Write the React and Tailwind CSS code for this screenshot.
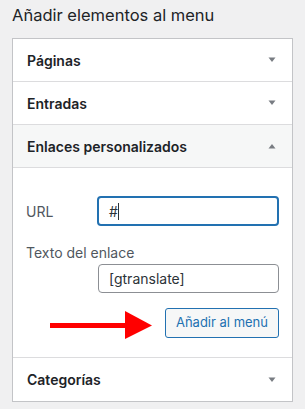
const font = { fontFamily: 'Inter, "Noto Sans", Roboto, sans-serif' };

const Caret = ({ up }) => (
  <svg width="10" height="6" viewBox="0 0 10 6" className="shrink-0">
    {up ? <path d="M1.5 5.5 L5 1 L8.5 5.5 Z" fill="#787c82" /> : <path d="M1.5 0.5 L8.5 0.5 L5 5 Z" fill="#787c82" />}
  </svg>
);

const Row = ({ label, up, shaded }) => (
  <div
    className={`flex items-center justify-between h-[43px] pl-[14px] pr-[15px] border-b border-[#dcdcde] ${shaded ? 'bg-[#f6f7f7]' : 'bg-white'}`}
  >
    <span className="text-[14px] font-semibold text-[#1d2327]">{label}</span>
    <Caret up={up} />
  </div>
);

export default function App() {
  return (
    <div className="min-h-screen bg-[#f0f0f1] px-[12px] pt-[4px]" style={font}>
      <h3 className="text-[16.5px] leading-[22px] text-[#1d2327] font-normal">Añadir elementos al menu</h3>

      <div className="mt-[12px] w-[281px] bg-white border border-[#c3c4c7]">
        <Row label="Páginas" />
        <Row label="Entradas" />
        <Row label="Enlaces personalizados" up shaded />

        <div className="pt-[28px] px-[13px] pb-[18px] border-b border-[#dcdcde]">
          <div className="flex items-center">
            <span className="w-[71px] text-[14px] text-[#50575e]">URL</span>
            <div className="flex-1 h-[30px] border-2 border-[#2271b1] rounded-[4px] flex items-center pl-[10px] text-[14px] text-[#2c3338]">
              #<span className="w-px h-[17px] bg-[#2c3338]" />
            </div>
          </div>

          <div className="mt-[18px] text-[14px] leading-[18px] text-[#50575e]">Texto del enlace</div>
          <div className="mt-[2px] ml-[72px] h-[29px] border border-[#8c8f94] rounded-[4px] flex items-center pl-[10px] text-[14px] text-[#2c3338]">
            [gtranslate]
          </div>

          <div className="mt-[13px] flex items-center justify-end gap-[13px]">
            <svg width="102" height="28" viewBox="0 0 102 28" className="mt-[5px]">
              <rect x="0" y="12" width="76" height="5" fill="#ff0000" />
              <path d="M75 0 L102 14.5 L75 28 Z" fill="#ff0000" />
            </svg>
            <button className="h-[30px] px-[10px] border border-[#2271b1] bg-[#f6f7f7] rounded-[3px] text-[13px] text-[#2271b1]">
              Añadir al menú
            </button>
          </div>
        </div>

        <div className="flex items-center justify-between h-[43px] pl-[14px] pr-[15px]">
          <span className="text-[14px] font-semibold text-[#1d2327]">Categorías</span>
          <Caret />
        </div>
      </div>
    </div>
  );
}
